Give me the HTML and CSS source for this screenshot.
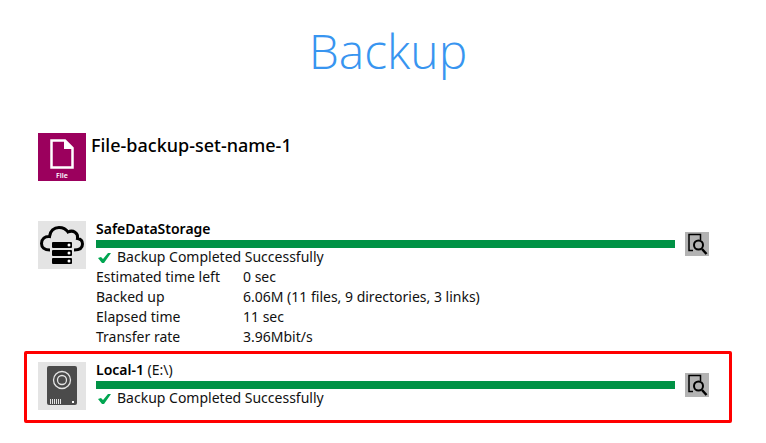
FILE: index.html
```
<!DOCTYPE html>
<html lang="en">
<head>
  <meta charset="UTF-8">
  <meta name="viewport" content="width=device-width, initial-scale=1.0">
  <title>Backup</title>
  <link rel="stylesheet" href="styles.css">
</head>
<body>
  <h1>Backup</h1>

  <!-- Backup set -->
  <div class="backup-set">
    <svg class="icon" viewBox="0 0 48 48" aria-hidden="true">
      <rect width="48" height="48" fill="#9b005d"/>
      <path d="M13.500 7.500H27L34.500 15V34.500H13.500Z" fill="none" stroke="#fff" stroke-width="2.500"/>
      <path d="M26 7V16H35Z" fill="#fff"/>
      <text class="icon-label" x="24" y="45" text-anchor="middle">File</text>
    </svg>
    <h2>File-backup-set-name-1</h2>
  </div>

  <!-- Cloud destination -->
  <div class="destination">
    <svg class="icon" viewBox="0 0 48 48" aria-hidden="true">
      <rect width="48" height="48" fill="#e4e4e4"/>
      <path d="M12 29C6 29 3.500 26 3.500 22.500C3.500 18 7 15 11.500 15.500C12 10 16 6.500 21 6.500C25 6.500 28 8 30 11C35 8.500 40.500 12 39.500 17.500C43 18 44.500 20.500 44.500 23C44.500 27 42 29 36 29" fill="none" stroke="#000" stroke-width="3"/>
      <rect x="14" y="21" width="20" height="6" rx="1"/>
      <rect x="14" y="29" width="20" height="6" rx="1"/>
      <rect x="14" y="37" width="20" height="6" rx="1"/>
      <circle cx="31" cy="24" r="1.500" fill="#fff"/>
      <circle cx="31" cy="32" r="1.500" fill="#fff"/>
      <circle cx="31" cy="40" r="1.500" fill="#fff"/>
    </svg>
    <div class="details">
      <label class="name" for="cloudProgress"><b>SafeDataStorage</b></label>
      <progress id="cloudProgress" value="100" max="100"></progress>
      <div class="status">
        <svg class="check" viewBox="0 0 14 12" aria-hidden="true"><path d="M0 7L3 6L5 8L10 2H13L6 12H4Z" fill="#00a651"/></svg>
        Backup Completed Successfully
      </div>
      <table>
        <tr>
          <th scope="row">Estimated time left</th>
          <td>0 sec</td>
        </tr>
        <tr>
          <th scope="row">Backed up</th>
          <td>6.06M (11 files, 9 directories, 3 links)</td>
        </tr>
        <tr>
          <th scope="row">Elapsed time</th>
          <td>11 sec</td>
        </tr>
        <tr>
          <th scope="row">Transfer rate</th>
          <td>3.96Mbit/s</td>
        </tr>
      </table>
    </div>
    <button type="button" class="log-button" aria-label="View log">
      <svg viewBox="0 0 24 24" aria-hidden="true">
        <path d="M8 18.500H4V2.500H15.500V8" fill="none" stroke="#000" stroke-width="1.500"/>
        <circle cx="13.500" cy="13" r="4.500" fill="none" stroke="#000" stroke-width="2"/>
        <path d="M17 17L21.500 22" stroke="#000" stroke-width="2.500"/>
      </svg>
    </button>
  </div>

  <!-- Local destination -->
  <div class="destination highlighted">
    <svg class="icon" viewBox="0 0 48 48" aria-hidden="true">
      <rect width="48" height="48" fill="#e4e4e4"/>
      <rect x="9" y="4" width="30" height="39" rx="2" fill="#4b4b4b"/>
      <circle cx="24" cy="18" r="8.500" fill="none" stroke="#e4e4e4" stroke-width="1.300"/>
      <circle cx="24" cy="18" r="4.500" fill="none" stroke="#e4e4e4" stroke-width="1.300"/>
      <path d="M12.500 37V42M14.500 37V42M16.500 37V42M18.500 37V42M20.500 37V42M22.500 37V42" stroke="#e4e4e4"/>
      <rect x="34" y="39" width="2" height="2" fill="#fff"/>
    </svg>
    <div class="details">
      <label class="name" for="localProgress"><b>Local-1</b> (E:\)</label>
      <progress id="localProgress" value="100" max="100"></progress>
      <div class="status">
        <svg class="check" viewBox="0 0 14 12" aria-hidden="true"><path d="M0 7L3 6L5 8L10 2H13L6 12H4Z" fill="#00a651"/></svg>
        Backup Completed Successfully
      </div>
    </div>
    <button type="button" class="log-button" aria-label="View log">
      <svg viewBox="0 0 24 24" aria-hidden="true">
        <path d="M8 18.500H4V2.500H15.500V8" fill="none" stroke="#000" stroke-width="1.500"/>
        <circle cx="13.500" cy="13" r="4.500" fill="none" stroke="#000" stroke-width="2"/>
        <path d="M17 17L21.500 22" stroke="#000" stroke-width="2.500"/>
      </svg>
    </button>
  </div>
</body>
</html>
```

FILE: styles.css
```
* {
  box-sizing: border-box;
}
body {
  margin: 0;
  padding: 20px 34px 20px 24px;
  background-color: #fff;
  color: #111;
  font-family: "Noto Sans", "Open Sans", sans-serif;
  font-size: 14px;
  line-height: 20px;
}
h1 {
  margin: 0;
  padding-left: 20px;
  color: #3895f0;
  font-family: "Open Sans", "Noto Sans", sans-serif;
  font-size: 48px;
  font-weight: 300;
  line-height: 62px;
  text-align: center;
}
h2 {
  margin: 0;
  color: #000;
  font-size: 18px;
  font-weight: 500;
  line-height: 24px;
}
.backup-set {
  display: flex;
  gap: 5px;
  margin: 51px 0 38px;
  padding-left: 14px;
}
.icon {
  flex: none;
  width: 48px;
  height: 48px;
}
.icon-label {
  fill: #fff;
  font-size: 7px;
  font-weight: 600;
}
.destination {
  display: flex;
  gap: 10px;
  padding: 0 23px 0 14px;
}
.destination .icon {
  margin-top: 2px;
}
.highlighted {
  margin-top: 4px;
  padding: 6px 20px 10px 11px;
  border: 3px solid #f00;
  border-radius: 2px;
}
.details {
  flex: 1;
}
.name {
  display: block;
}
.name b {
  color: #000;
  font-weight: 600;
}
progress {
  display: block;
  width: 100%;
  height: 8px;
  margin-top: 1px;
  border: none;
  background-color: #009245;
  appearance: none;
}
progress::-webkit-progress-bar {
  background-color: #ddd;
}
progress::-webkit-progress-value {
  background-color: #009245;
}
.status {
  display: flex;
  align-items: center;
  gap: 5px;
  margin-bottom: 1px;
  padding-left: 2px;
  line-height: 18px;
}
.check {
  width: 14px;
  height: 12px;
}
table {
  border-collapse: collapse;
}
th, td {
  padding: 0;
  text-align: left;
  font-weight: 400;
}
th {
  width: 147px;
}
.log-button {
  flex: none;
  width: 24px;
  height: 24px;
  margin-top: 13px;
  padding: 0;
  border: none;
  background-color: #b3b3b3;
  cursor: pointer;
}
.log-button:hover {
  background-color: #a3a3a3;
}
.log-button svg {
  display: block;
}
```
